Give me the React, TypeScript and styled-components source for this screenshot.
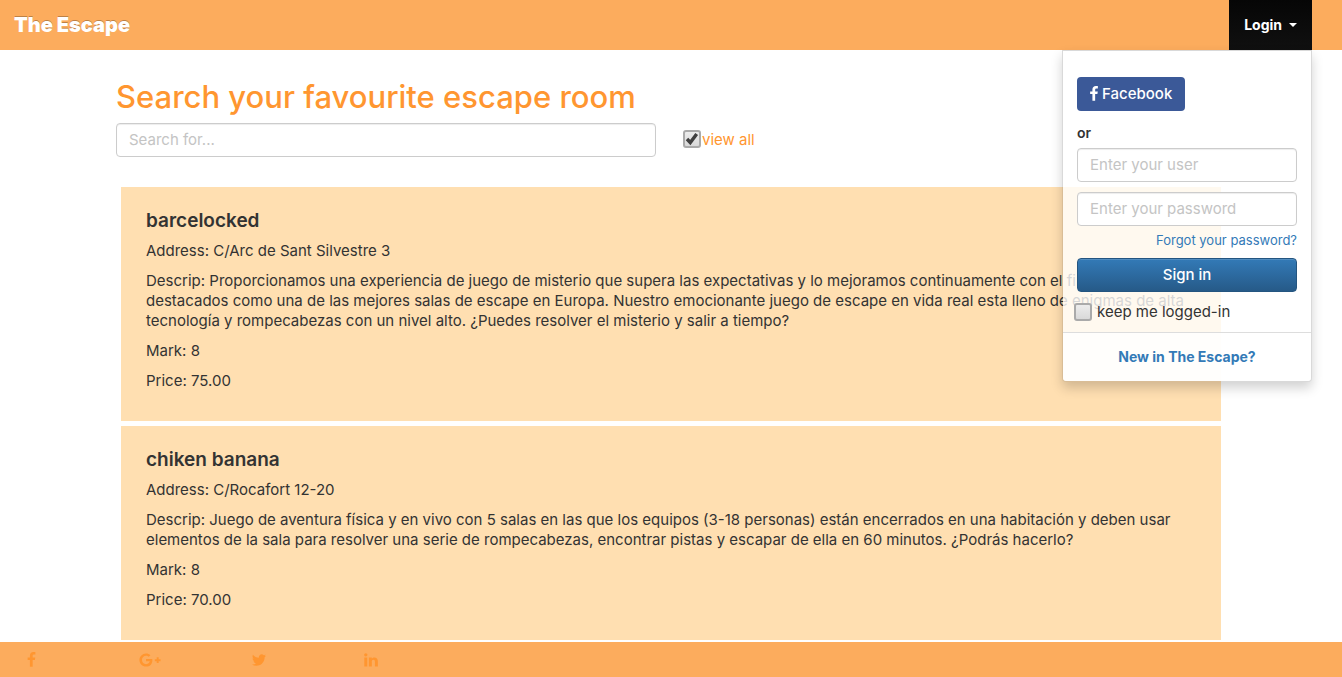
import React, { useState } from "react";
import styled, { createGlobalStyle, css } from "styled-components";
import { FaGooglePlusG } from "react-icons/fa";

const Global = createGlobalStyle`
  *, *::before, *::after { box-sizing: border-box; }
  body {
    margin: 0;
    background: #fff;
    color: #333;
    font-family: Inter, "Open Sans", sans-serif;
    font-size: 15px;
    line-height: 20px;
  }
  a { text-decoration: none; }
`;

const Navbar = styled.header`
  position: sticky;
  top: 0;
  z-index: 10;
  display: flex;
  justify-content: space-between;
  height: 50px;
  padding: 0 30px 0 14px;
  background: #fcac5d;
`;

const Brand = styled.a`
  align-self: center;
  color: #fff;
  font-size: 20px;
  font-weight: 900;
  text-shadow: 0 -1px 0 rgba(0, 0, 0, 0.25);
`;

const LoginMenu = styled.div`
  position: relative;
  display: flex;
`;

const LoginToggle = styled.button`
  display: flex;
  align-items: center;
  gap: 7px;
  padding: 0 15px;
  border: 0;
  background: linear-gradient(#060606, #101010);
  color: #fff;
  font: inherit;
  font-size: 14px;
  font-weight: 700;
  cursor: pointer;
`;

const Caret = styled.span`
  border-top: 4px solid #fff;
  border-left: 4px solid transparent;
  border-right: 4px solid transparent;
`;

const Panel = styled.div`
  position: absolute;
  top: 100%;
  right: 0;
  width: 250px;
  border: 1px solid rgba(0, 0, 0, 0.15);
  border-radius: 0 0 4px 4px;
  background: rgba(255, 255, 255, 0.8);
  background-clip: padding-box;
  box-shadow: 0 6px 12px rgba(0, 0, 0, 0.18);
`;

const LoginForm = styled.form`
  display: flex;
  flex-direction: column;
  align-items: stretch;
  padding: 26px 14px 10px;
`;

const buttonBase = css`
  display: flex;
  align-items: center;
  justify-content: center;
  height: 34px;
  border-radius: 4px;
  color: #fff;
  font: inherit;
  font-weight: 500;
  cursor: pointer;
`;

const FacebookButton = styled.button`
  ${buttonBase}
  align-self: flex-start;
  gap: 4px;
  padding: 0 13px;
  border: 0;
  background: #3b5998;
`;

const SignInButton = styled.button`
  ${buttonBase}
  margin: 8px 0 10px;
  border: 1px solid #245580;
  background: linear-gradient(#337ab7, #265a88);
  box-shadow: inset 0 1px 0 rgba(255, 255, 255, 0.15);
`;

const Or = styled.span`
  margin: 12px 0 5px;
  font-size: 14px;
  font-weight: 600;
`;

const TextField = styled.input`
  width: 100%;
  height: 34px;
  padding: 5px 12px 7px;
  border: 1px solid #ccc;
  border-radius: 4px;
  background: #fff;
  box-shadow: inset 0 1px 1px rgba(0, 0, 0, 0.075);
  color: #555;
  font: inherit;
  &::placeholder { color: #c4c4c4; opacity: 1; }
`;

const Fields = styled.div`
  display: grid;
  gap: 10px;
`;

const ForgotLink = styled.a`
  align-self: flex-end;
  margin-top: 4px;
  color: #337ab7;
  font-size: 13px;
`;

const CheckLabel = styled.label<{ $accent?: boolean }>`
  display: flex;
  align-items: ${(p) => (p.$accent ? "flex-start" : "center")};
  gap: ${(p) => (p.$accent ? 1 : 5)}px;
  color: ${(p) => (p.$accent ? "#ff9630" : "#333")};
`;

const KeepRow = styled.div`
  margin-left: -3px;
`;

const Tick = styled.input`
  appearance: none;
  width: 18px;
  height: 18px;
  margin: 0;
  border: 2px solid #aaa;
  border-radius: 3px;
  background: linear-gradient(#ececec, #d9d9d9);
  &:checked {
    background:
      url("data:image/svg+xml,%3Csvg xmlns='http://www.w3.org/2000/svg' viewBox='0 0 14 14'%3E%3Cpath d='M2 7l3.300 3.500L11.700 2' fill='none' stroke='%23404040' stroke-width='3.400'/%3E%3C/svg%3E") center / 14px 14px no-repeat,
      linear-gradient(#ececec, #d9d9d9);
  }
`;

const PanelFooter = styled.div`
  padding: 14px;
  border-top: 1px solid #ddd;
  border-radius: 0 0 4px 4px;
  background: rgba(255, 255, 255, 0.8);
  font-size: 14px;
  text-align: center;
`;

const JoinLink = styled.a`
  color: #337ab7;
  font-weight: 700;
`;

const Main = styled.main`
  max-width: 1170px;
  margin: 0 auto;
  padding: 30px 30px 37px;
`;

const Title = styled.h1`
  margin: 0 0 10px;
  color: #ff9630;
  font-size: 31px;
  font-weight: 500;
  line-height: 33px;
`;

const SearchRow = styled.div`
  display: grid;
  grid-template-columns: minmax(0, 540px) auto;
  gap: 27px;
  justify-content: start;
  align-items: center;
  margin-bottom: 30px;
`;

const Rooms = styled.div`
  display: grid;
  gap: 5px;
  padding: 0 5px;
`;

const Room = styled.article`
  padding: 24px 25px 20px;
  background: #ffdfb1;
`;

const RoomName = styled.h2`
  margin: 0 0 10px;
  font-size: 19px;
  font-weight: 600;
  line-height: 20px;
`;

const RoomText = styled.p`
  margin: 0 0 10px;
`;

const Footer = styled.footer`
  position: fixed;
  right: 0;
  bottom: 0;
  left: 0;
  display: grid;
  grid-template-columns: repeat(12, 1fr);
  height: 35px;
  background: #fcac5d;
`;

const SocialLink = styled.a`
  display: flex;
  align-items: center;
  padding-left: 27px;
  color: #ff9630;
`;

const FACEBOOK =
  "M1343 12v264h-157q-86 0-116 36t-30 108v189h293l-39 296h-254v759h-306v-759h-255v-296h255v-218q0-186 104-288.5t277-102.5q147 0 228 12z";
const TWITTER =
  "M1684 408q-67 98-162 167 1 14 1 42 0 130-38 259.5t-115.5 248.5-184.5 210.5-258 146-323 54.5q-271 0-496-145 35 4 78 4 225 0 401-138-105-2-188-64.5t-114-159.5q33 5 61 5 43 0 85-11-112-23-185.5-111.5t-73.5-205.5v-4q68 38 146 41-66-44-105-115t-39-154q0-88 44-163 121 149 294.5 238.5t371.5 99.5q-8-38-8-74 0-134 94.5-228.5t228.5-94.5q140 0 236 102 109-21 205-78-37 115-142 178 93-10 186-50z";
const LINKEDIN =
  "M477 625v991h-330v-991h330zm21-306q1 73-50.5 122t-135.5 49h-2q-82 0-132-49t-50-122q0-74 51.5-122.5t134.5-48.5 133 48.5 51 122.5zm1166 729v568h-329v-530q0-105-40.5-164.5t-126.5-59.5q-63 0-105.5 34.5t-63.5 85.5q-11 30-11 81v553h-329q2-399 2-647t-1-296l-1-48h329v144h-2q20-32 41-56t56.5-52 87-43.5 114.5-15.5q171 0 275 113.5t104 332.5z";

const Glyph = ({ d, box = "0 0 1792 1792", width = 16, height = 16 }: { d: string; box?: string; width?: number; height?: number }) => (
  <svg width={width} height={height} viewBox={box} fill="currentColor" aria-hidden="true">
    <path d={d} />
  </svg>
);

const rooms = [
  {
    name: "barcelocked",
    address: "C/Arc de Sant Silvestre 3",
    text: "Proporcionamos una experiencia de juego de misterio que supera las expectativas y lo mejoramos continuamente con el fin de ser destacados como una de las mejores salas de escape en Europa. Nuestro emocionante juego de escape en vida real esta lleno de enigmas de alta tecnología y rompecabezas con un nivel alto. ¿Puedes resolver el misterio y salir a tiempo?",
    mark: 8,
    price: "75.00",
  },
  {
    name: "chiken banana",
    address: "C/Rocafort 12-20",
    text: "Juego de aventura física y en vivo con 5 salas en las que los equipos (3-18 personas) están encerrados en una habitación y deben usar elementos de la sala para resolver una serie de rompecabezas, encontrar pistas y escapar de ella en 60 minutos. ¿Podrás hacerlo?",
    mark: 8,
    price: "70.00",
  },
];

export default function App() {
  const [open, setOpen] = useState(true);
  return (
    <>
      <Global />
      <Navbar>
        <Brand href="#">The Escape</Brand>
        <LoginMenu>
          <LoginToggle type="button" aria-expanded={open} onClick={() => setOpen(!open)}>
            Login <Caret />
          </LoginToggle>
          {open && (
            <Panel>
              <LoginForm onSubmit={(e) => e.preventDefault()}>
                <FacebookButton type="button">
                  <Glyph d={FACEBOOK} box="479 0 864 1792" width={8} height={16} />
                  Facebook
                </FacebookButton>
                <Or>or</Or>
                <Fields>
                  <TextField type="text" placeholder="Enter your user" aria-label="User" />
                  <TextField type="password" placeholder="Enter your password" aria-label="Password" />
                </Fields>
                <ForgotLink href="#">Forgot your password?</ForgotLink>
                <SignInButton type="submit">Sign in</SignInButton>
                <KeepRow>
                  <CheckLabel>
                    <Tick type="checkbox" />
                    keep me logged-in
                  </CheckLabel>
                </KeepRow>
              </LoginForm>
              <PanelFooter>
                <JoinLink href="#">New in The Escape?</JoinLink>
              </PanelFooter>
            </Panel>
          )}
        </LoginMenu>
      </Navbar>
      <Main>
        <Title>Search your favourite escape room</Title>
        <SearchRow>
          <TextField type="text" placeholder="Search for..." aria-label="Search" />
          <CheckLabel $accent>
            <Tick type="checkbox" defaultChecked />
            view all
          </CheckLabel>
        </SearchRow>
        <Rooms>
          {rooms.map((r) => (
            <Room key={r.name}>
              <RoomName>{r.name}</RoomName>
              <RoomText>Address: {r.address}</RoomText>
              <RoomText>Descrip: {r.text}</RoomText>
              <RoomText>Mark: {r.mark}</RoomText>
              <RoomText>Price: {r.price}</RoomText>
            </Room>
          ))}
        </Rooms>
      </Main>
      <Footer>
        <SocialLink href="#" aria-label="Facebook">
          <Glyph d={FACEBOOK} box="479 0 864 1792" width={9} height={16} />
        </SocialLink>
        <SocialLink href="#" aria-label="Google Plus">
          <FaGooglePlusG size={22} />
        </SocialLink>
        <SocialLink href="#" aria-label="Twitter">
          <Glyph d={TWITTER} />
        </SocialLink>
        <SocialLink href="#" aria-label="LinkedIn">
          <Glyph d={LINKEDIN} />
        </SocialLink>
      </Footer>
    </>
  );
}
